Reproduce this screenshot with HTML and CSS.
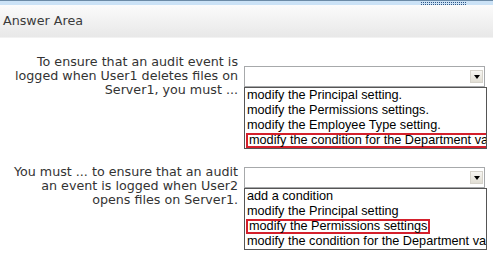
FILE: index.html
```html
<!DOCTYPE html>
<html>
<head>
  <title>Answer Area</title>
  <link rel="stylesheet" href="styles.css">
</head>
<body>
  <div class="topbar"><span class="grip"></span></div>
  <div class="header">Answer Area</div>

  <div class="question q1">
    <div class="prompt">To ensure that an audit event is<br>logged when User1 deletes files on<br>Server1, you must ...</div>
    <div class="answer">
      <div class="select"><span class="arrow"></span></div>
      <ul class="options">
        <li>modify the Principal setting.</li>
        <li>modify the Permissions settings.</li>
        <li>modify the Employee Type setting.</li>
        <li><span class="picked">modify the condition for the Department va</span></li>
      </ul>
    </div>
  </div>

  <div class="question q2">
    <div class="prompt">You must ... to ensure that an audit<br>an event is logged when User2<br>opens files on Server1.</div>
    <div class="answer">
      <div class="select"><span class="arrow"></span></div>
      <ul class="options">
        <li>add a condition</li>
        <li>modify the Principal setting</li>
        <li><span class="picked">modify the Permissions settings</span></li>
        <li>modify the condition for the Department va</li>
      </ul>
    </div>
  </div>
</body>
</html>
```

FILE: styles.css
```css
body {
  margin: 0;
  background-color: white;
  font-family: "DejaVu Sans", Verdana, sans-serif;
  font-size: 12.7px;
  color: #333;
}

.topbar {
  height: 4px;
  border-top: 1px solid #6b8aa6;
  background-color: #cbe2f6;
  position: relative;
}

.grip {
  position: absolute;
  left: 421px;
  top: 1px;
  width: 45px;
  height: 1px;
  border-top: 1px dotted #2d5687;
  border-bottom: 1px dotted #2d5687;
}

.header {
  height: 32px;
  line-height: 32px;
  padding-left: 3px;
  background: linear-gradient(#fbfbfb, #e8e8e8);
  border-bottom: 1px solid #f2f2f2;
  color: #3a3a3a;
}

.question {
  display: flex;
  gap: 6px;
}

.q1 {
  margin-top: 17px;
}

.q2 {
  margin-top: 16px;
}

.prompt {
  width: 238px;
  text-align: right;
  line-height: 14px;
}

.q1 .answer {
  margin-top: 11px;
}

.q2 .answer {
  margin-top: 2px;
}

.select {
  width: 238px;
  height: 19px;
  border: 1px solid #a7a9ab;
  background-color: white;
  display: flex;
  align-items: center;
  justify-content: flex-end;
  padding-right: 1px;
}

.arrow {
  width: 13px;
  height: 13px;
  background: linear-gradient(#f7f6f2, #e1ded4);
  border: 1px solid #d6d3cb;
  box-sizing: border-box;
  display: flex;
  align-items: center;
  justify-content: center;
}

.arrow::after {
  content: "";
  border-left: 3px solid transparent;
  border-right: 3px solid transparent;
  border-top: 4px solid black;
  margin-top: 1px;
}

.options {
  list-style: none;
  margin: 0;
  padding: 0;
  width: 241px;
  border: 1px solid #555;
  font-family: "Liberation Sans", Arial, sans-serif;
  font-size: 12.7px;
  color: black;
  overflow: hidden;
}

.options li {
  height: 15px;
  line-height: 15px;
  padding-left: 2px;
  white-space: nowrap;
}

.picked {
  display: inline-block;
  margin-left: -1px;
  padding: 0 1px;
  line-height: 11px;
  border: 2px solid #d4202c;
}
```
